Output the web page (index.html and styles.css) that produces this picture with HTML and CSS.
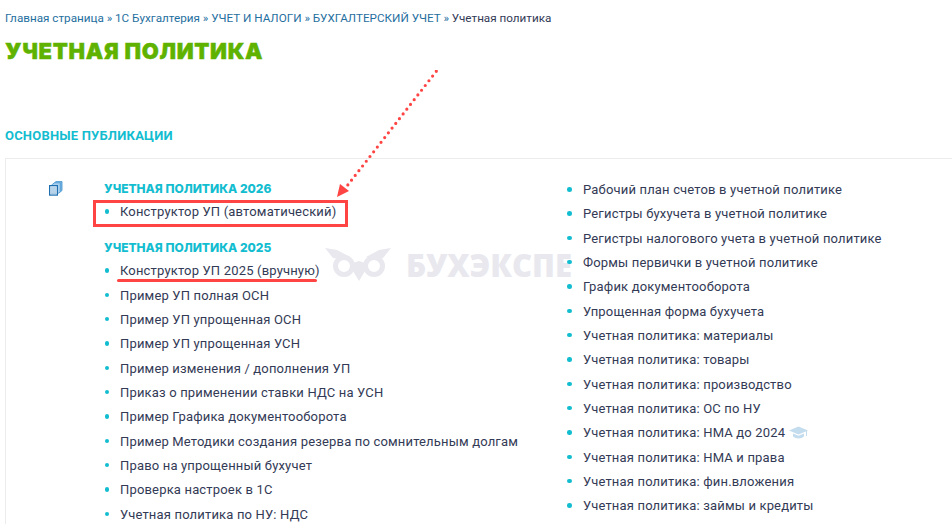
FILE: index.html
```html
<!DOCTYPE html>
<html lang="ru">
<head>
    <meta charset="UTF-8">
    <meta name="viewport" content="width=device-width, initial-scale=1.0">
    <title>Учетная политика</title>
    <link rel="stylesheet" href="styles.css">
</head>
<body>
    <div class="page">
        <div class="breadcrumbs">
            <a href="#">Главная страница</a> » <a href="#">1С Бухгалтерия</a> » <a href="#">УЧЕТ И НАЛОГИ</a> » <a href="#">БУХГАЛТЕРСКИЙ УЧЕТ</a> » <span>Учетная политика</span>
        </div>
        <h1>Учетная политика</h1>
        <h2>Основные публикации</h2>

        <div class="panel">
            <div class="panel-icon">
                <svg width="15" height="15" viewBox="0 0 15 15">
                    <path d="M5 3 L8 .6 H14 V9.500 L11 12 Z" fill="#7db8e4" stroke="#3f8fcb" stroke-width=".8"/>
                    <path d="M3.500 4 L6.500 1.800 H12.300 V10.800 L9.500 13 Z" fill="#a9d0ee" stroke="#4f9ad2" stroke-width=".8"/>
                    <rect x="1.600" y="4.600" width="7.800" height="9.500" fill="#d7e8f5" stroke="#1f6fae" stroke-width="1.200"/>
                    <path d="M3 7h5M3 9h5M3 11h5M3 12.800h5" stroke="#8fbbdc" stroke-width=".9"/>
                </svg>
            </div>

            <div class="col-left">
                <div class="watermark">
                    <svg width="66" height="34" viewBox="0 0 66 34">
                        <path d="M0 0 L12 2 L25 9 L16 11 L8 10 Z" fill="#e8e8ee"/>
                        <path d="M66 0 L54 2 L41 9 L50 11 L58 10 Z" fill="#e8e8ee"/>
                        <circle cx="19" cy="18" r="8.500" fill="none" stroke="#e8e8ee" stroke-width="5"/>
                        <circle cx="49" cy="18" r="8.500" fill="none" stroke="#e8e8ee" stroke-width="5"/>
                        <path d="M28 15 L34 13 L40 15 L40 23 L34 33 L28 23 Z" fill="#e8e8ee"/>
                    </svg>
                    <span>БУХЭКСПЕ</span>
                </div>

                <h3>Учетная политика 2026</h3>
                <ul class="links">
                    <li>Конструктор УП (автоматический)</li>
                </ul>
                <h3 class="next">Учетная политика 2025</h3>
                <ul class="links">
                    <li>Конструктор УП 2025 (вручную)</li>
                    <li>Пример УП полная ОСН</li>
                    <li>Пример УП упрощенная ОСН</li>
                    <li>Пример УП упрощенная УСН</li>
                    <li>Пример изменения / дополнения УП</li>
                    <li>Приказ о применении ставки НДС на УСН</li>
                    <li>Пример Графика документооборота</li>
                    <li>Пример Методики создания резерва по сомнительным долгам</li>
                    <li>Право на упрощенный бухучет</li>
                    <li>Проверка настроек в 1С</li>
                    <li>Учетная политика по НУ: НДС</li>
                </ul>
            </div>

            <div class="col-right">
                <ul class="links">
                    <li>Рабочий план счетов в учетной политике</li>
                    <li>Регистры бухучета в учетной политике</li>
                    <li>Регистры налогового учета в учетной политике</li>
                    <li>Формы первички в учетной политике</li>
                    <li>График документооборота</li>
                    <li>Упрощенная форма бухучета</li>
                    <li>Учетная политика: материалы</li>
                    <li>Учетная политика: товары</li>
                    <li>Учетная политика: производство</li>
                    <li>Учетная политика: ОС по НУ</li>
                    <li>Учетная политика: НМА до 2024
                        <svg class="cap" width="19" height="13" viewBox="0 0 19 13">
                            <path d="M9.500 .5 L19 4.500 L9.500 8.500 L0 4.500 Z" fill="#c3dcee"/>
                            <path d="M4 7.500 L9.500 9.800 L15 7.500 V10.500 C12 13 7 13 4 10.500 Z" fill="#c3dcee"/>
                            <path d="M17.500 5 V10" stroke="#c3dcee" stroke-width="1"/>
                        </svg>
                    </li>
                    <li>Учетная политика: НМА и права</li>
                    <li>Учетная политика: фин.вложения</li>
                    <li>Учетная политика: займы и кредиты</li>
                </ul>
            </div>
        </div>

        <!-- пометки поверх скриншота -->
        <div class="mark-box"></div>
        <div class="mark-line"></div>
        <svg class="mark-arrow" width="120" height="140" viewBox="0 0 120 140">
            <line x1="116.300" y1="1.300" x2="27" y2="116" stroke="#ff4444" stroke-width="3.200" stroke-linecap="round" stroke-dasharray="0 6"/>
            <path d="M17 127 L20 114 L29 121 Z" fill="#ff4444"/>
        </svg>
    </div>
</body>
</html>
```

FILE: styles.css
```css
html, body {
    margin: 0;
    height: 100%;
    overflow: hidden;
    background-color: white;
}

body {
    font-family: Roboto, "Liberation Sans", sans-serif;
    font-size: 13px;
    color: #333a56;
}

.page {
    position: relative;
    height: 524px;
    overflow: hidden;
    padding: 11px 0 0 5px;
    box-sizing: border-box;
}

.breadcrumbs {
    font-size: 11.7px;
    line-height: 14px;
    color: #1f6fa0;
}

.breadcrumbs a {
    color: #1f6fa0;
    text-decoration: none;
}

.breadcrumbs span {
    color: #333a56;
}

h1 {
    margin: 13px 0 0;
    font-family: Inter, "Open Sans", sans-serif;
    font-size: 22px;
    line-height: 26px;
    font-weight: 900;
    letter-spacing: .7px;
    text-transform: uppercase;
    color: #5fb300;
    -webkit-text-stroke: .4px #5fb300;
}

h2 {
    margin: 64px 0 0;
    font-size: 13px;
    line-height: 15px;
    font-weight: 700;
    letter-spacing: .2px;
    text-transform: uppercase;
    color: #13bdd0;
}

.panel {
    display: flex;
    width: 947px;
    height: 400px;
    margin-top: 15px;
    border-top: 1px solid #ececec;
    border-left: 1px solid #ececec;
    box-sizing: border-box;
}

.panel-icon {
    width: 98px;
    padding: 22px 0 0 42px;
    box-sizing: border-box;
    flex-shrink: 0;
}

.col-left {
    position: relative;
    width: 463px;
    padding-top: 23px;
    flex-shrink: 0;
}

.col-right {
    position: relative;
    flex: 1;
    padding-top: 19px;
}

h3 {
    position: relative;
    margin: 0;
    font-family: Inter, "Open Sans", sans-serif;
    font-size: 12px;
    line-height: 14px;
    font-weight: 800;
    text-transform: uppercase;
    color: #13bdd0;
}

h3.next {
    margin-top: 17px;
}

.links {
    position: relative;
    list-style: none;
    margin: 0;
    padding: 0;
}

.col-left .links {
    margin-top: 4px;
}

.links li {
    position: relative;
    padding-left: 16px;
    height: 24.33px;
    line-height: 24.33px;
    letter-spacing: .17px;
    white-space: nowrap;
}

.col-right .links li {
    padding-left: 16px;
}

.links li::before {
    content: "";
    position: absolute;
    left: .5px;
    top: 9px;
    width: 4.5px;
    height: 4.5px;
    border-radius: 50%;
    background-color: #13bdd0;
}

.col-right .links li::before {
    left: 0;
}

.cap {
    vertical-align: -2px;
}

.watermark {
    position: absolute;
    left: 221px;
    top: 85px;
    display: flex;
    align-items: center;
    gap: 15px;
    font-family: "Open Sans", sans-serif;
    font-size: 31px;
    font-weight: 800;
    color: #e8e8ee;
    white-space: nowrap;
}

.mark-box {
    position: absolute;
    left: 93px;
    top: 200px;
    width: 255px;
    height: 27px;
    border: 3px solid #f44;
    box-sizing: border-box;
}

.mark-line {
    position: absolute;
    left: 117px;
    top: 279px;
    width: 200px;
    height: 3px;
    border-radius: 2px;
    background-color: #f44;
}

.mark-arrow {
    position: absolute;
    left: 320px;
    top: 70px;
}
```
